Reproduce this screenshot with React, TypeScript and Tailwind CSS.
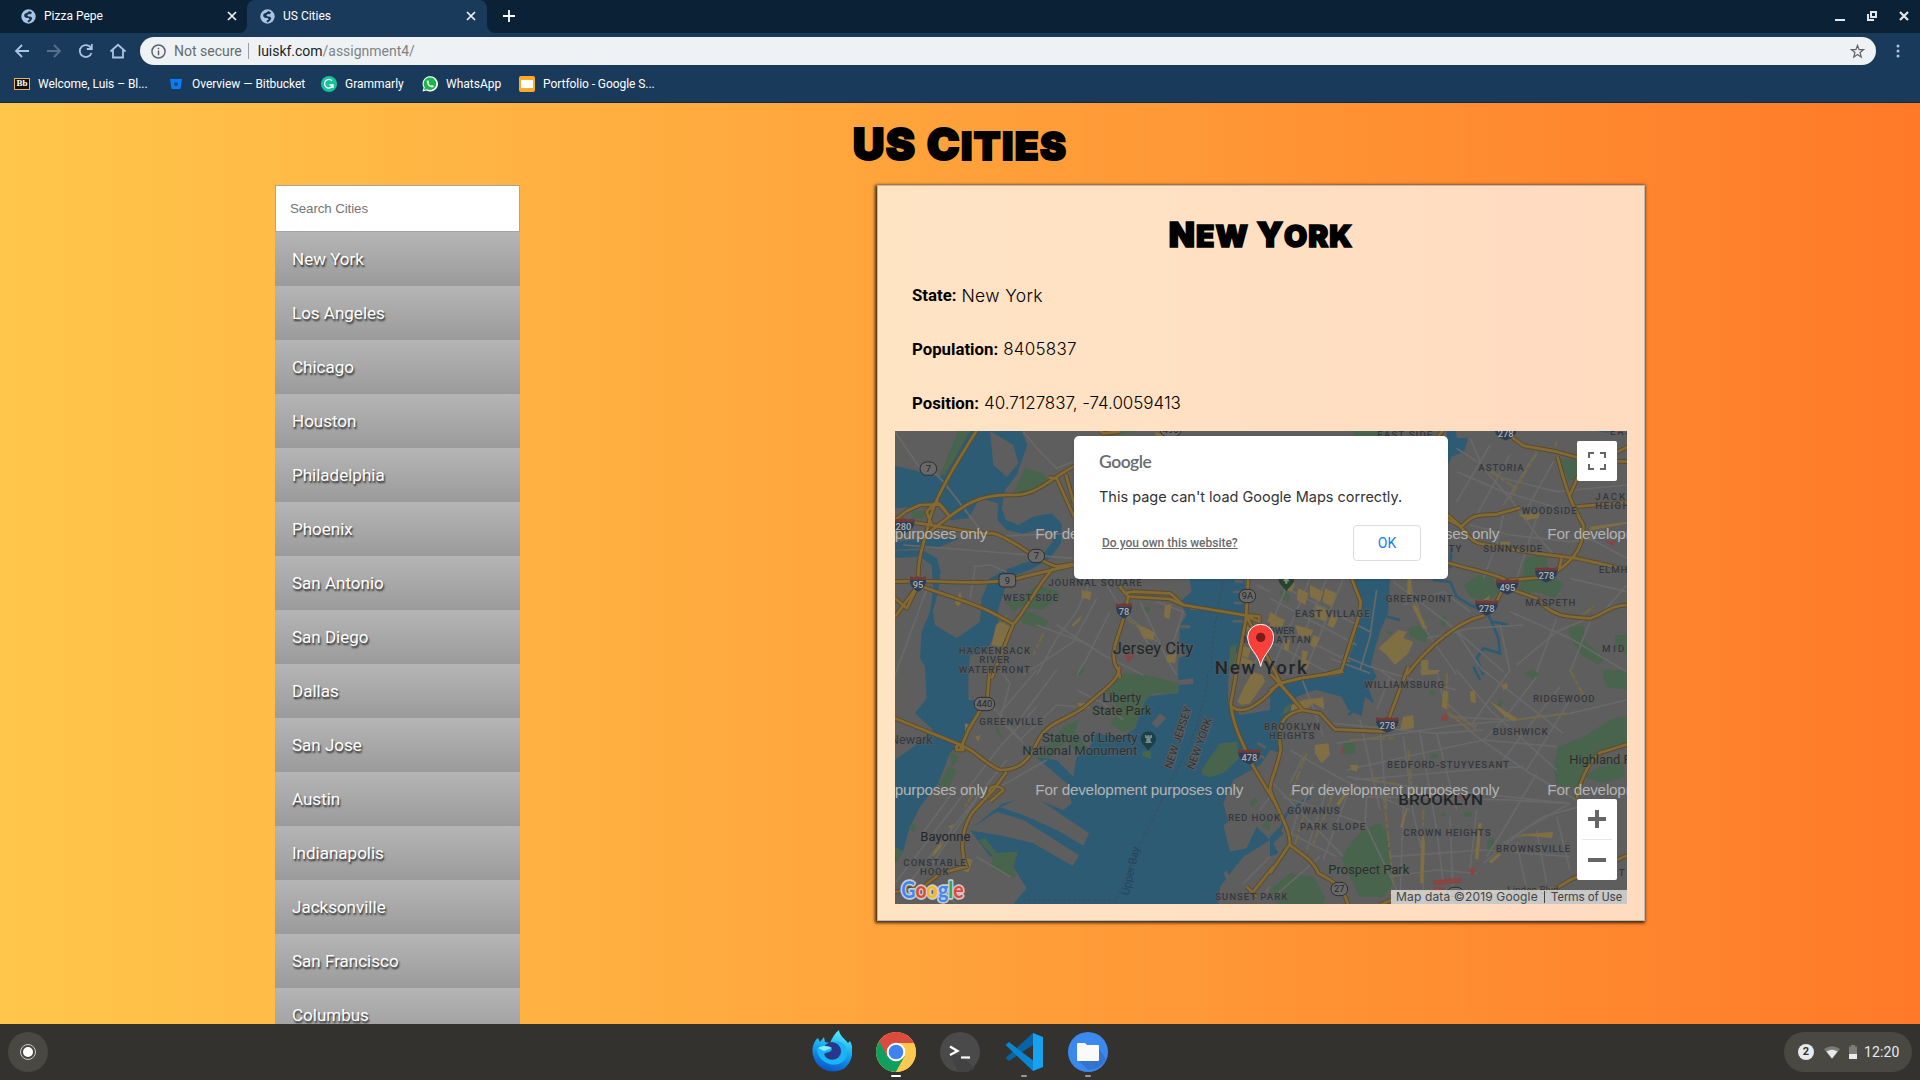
import React from "react";

const cities = [
  "New York", "Los Angeles", "Chicago", "Houston", "Philadelphia", "Phoenix", "San Antonio", "San Diego",
  "Dallas", "San Jose", "Austin", "Indianapolis", "Jacksonville", "San Francisco", "Columbus",
];

const NW = "translate(-15 -18)";
const NE = "translate(1125 -18)";
const SW = "translate(-15 717)";
const SE = "translate(1125 717)";
const MID = "translate(705 417)";

type Sheet = { at: string; d: string[] };

const water: Sheet[] = [
  {
    at: NW,
    d: [
      "M262 18 L395 18 L412 60 L380 150 L345 195 L335 250 L348 285 L385 300 L430 275 L485 265 L515 295 L513 355 L480 400 L430 430 L380 450 L345 490 L325 550 L325 600 L290 680 L240 690 L235 750 L120 750 L90 700 L95 620 L120 560 L130 490 L125 420 L90 395 L15 398 V378 L95 375 L140 398 L152 440 L145 500 L128 560 L135 600 L200 640 L270 590 L275 520 L300 460 L345 435 L400 415 L450 400 L488 350 L488 325 L450 312 L400 326 L350 315 L322 285 L325 235 L270 220 L235 280 L185 285 L150 240 L15 250 V122 L150 155 L205 18 Z",
      "M120 340 L210 340 L150 365 L15 375 V350 Z",
      "M895 440 H1065 V520 L1060 600 L1045 680 L1018 700 L1015 760 H865 L865 700 L890 690 L868 650 L870 600 L890 570 L870 530 L905 500 Z",
    ],
  },
  {
    at: NE,
    d: [
      "M246 455 H360 L355 560 L330 620 L312 680 L295 760 H205 L240 690 L272 560 Z",
      "M530 18 L555 18 L562 40 L595 38 L582 80 L545 95 L530 130 Z",
      "M980 18 H1030 L1010 24 Z",
    ],
  },
  {
    at: SW,
    d: [
      "M865 -10 L865 68 L770 80 L735 175 L690 205 L620 190 L590 250 L560 260 L550 320 L500 270 L440 262 L530 340 L545 400 L520 420 L420 380 L340 400 L300 430 L240 480 L300 560 L382 545 L370 590 L410 655 L370 702 L985 702 L990 650 L1060 560 L1140 510 L1100 470 L1070 535 L1020 545 L1000 465 L1015 455 L1000 400 L1030 330 L1110 285 L1170 200 L1210 110 L1140 120 L1050 135 L1015 100 L1014 50 L1016 -10 Z",
      "M105 -10 H235 V90 H270 L255 150 L205 225 L180 250 L145 340 L90 410 L60 470 L40 540 L15 580 V270 L70 230 L130 180 L75 130 L110 85 Z",
    ],
  },
  {
    at: SE,
    d: [
      "M0 60 L50 35 L220 15 L245 -10 H305 L320 20 L295 50 L310 100 L285 80 L275 138 L235 120 L215 80 L160 65 L135 60 L80 80 L50 130 L15 160 L35 250 L0 240 Z",
      "M0 500 L25 475 L40 490 L10 520 L25 550 L0 560 Z",
      "M275 650 L310 630 L340 650 L325 670 L280 680 Z",
    ],
  },
];

const land: Sheet[] = [
  { at: NW, d: ["M300 18 L370 60 L385 115 L350 155 L310 120 Z"] },
  {
    at: SW,
    d: [
      "M235 480 L320 425 L400 450 L568 556 L548 588 L430 520 L340 498 Z",
      "M330 412 L420 372 L480 410 L597 490 L580 527 L500 480 L400 435 Z",
      "M785 160 L810 130 L828 145 L800 175 Z",
      "M1040 585 L1050 575 L1080 610 L1070 620 Z M1065 570 L1078 562 L1105 595 L1092 605 Z M1095 552 L1108 545 L1130 580 L1120 590 Z M1000 610 L1010 600 L1030 640 L1020 650 Z",
    ],
  },
  {
    at: MID,
    d: [
      "M315 30 H340 V38 H315 Z M310 62 H340 V70 H310 Z M312 95 H338 V103 H312 Z M308 150 H338 V158 H308 Z",
      "M180 110 H205 V120 H180 Z M150 165 H180 V175 H150 Z M145 330 L190 325 V342 L145 345 Z",
      "M385 515 L410 530 L404 537 L380 522 Z M375 545 L405 560 L400 568 L370 552 Z",
    ],
  },
];

const parks: Sheet[] = [
  {
    at: NW,
    d: [
      "M150 150 L205 18 H240 L165 150 Z", "M370 205 L405 130 L460 145 L475 170 L410 205 Z", "M65 255 L105 262 L100 282 L65 278 Z",
      "M345 530 L400 515 L440 480 L505 500 L510 520 L480 535 L460 555 L395 545 L370 560 Z",
      "M400 560 L420 560 L475 585 L465 612 L395 595 Z", "M762 545 L780 545 L778 562 L762 560 Z", "M545 750 L585 725 L575 750 Z", "M670 18 H740 L690 28 Z",
    ],
  },
  {
    at: NE,
    d: [
      "M865 100 L920 105 L925 160 L895 170 Z", "M765 400 L830 388 L830 430 L880 480 L855 520 L800 500 L740 510 L760 450 Z",
      "M580 480 L625 450 L670 460 L690 500 L650 530 L600 515 Z", "M895 605 L940 600 L945 650 L1005 700 L985 720 L935 690 L900 640 Z",
      "M1035 630 H1070 V690 L1035 670 Z", "M415 610 L445 600 L475 625 L470 655 L420 635 Z", "M512 575 L528 575 L526 605 L512 600 Z",
      "M30 495 L60 510 L55 530 L32 520 Z", "M345 615 L368 622 L360 630 Z", "M250 18 H355 L340 35 H250 Z",
    ],
  },
  {
    at: SW,
    d: [
      "M700 10 L770 15 L865 40 L862 72 L790 68 L760 100 L735 178 L700 185 L660 160 L690 120 L650 70 L620 80 Z",
      "M440 262 L520 170 L565 150 L555 190 L600 240 L560 245 L530 215 L480 265 Z", "M935 300 L990 220 L1040 215 L1047 265 L1000 310 L960 322 L938 315 Z",
      "M180 245 L210 260 L185 293 Z", "M145 345 L175 290 L200 300 L175 355 Z", "M265 510 L285 505 L320 548 L383 545 L370 590 L378 620 L330 610 L300 590 L310 560 Z",
      "M55 470 L68 458 L80 470 L70 487 Z", "M15 530 L40 545 L20 580 Z", "M1078 398 L1095 382 L1104 395 L1088 408 Z", "M755 245 L780 240 L785 268 L760 260 Z",
      "M315 175 L322 170 L335 200 L328 202 Z", "M1115 470 L1140 440 V480 Z",
    ],
  },
  {
    at: SE,
    d: [
      "M1000 0 H1070 V60 L1010 50 L1000 20 Z", "M850 290 L865 230 L940 200 L1030 145 L1070 140 V230 L990 250 L930 330 L918 355 L860 345 Z",
      "M940 320 L990 290 L1060 275 L1065 320 L1000 340 Z", "M218 218 L255 218 L257 250 L222 250 Z", "M213 560 L275 480 L325 460 L355 490 L365 600 L370 640 L340 680 L270 680 L240 620 Z",
      "M0 660 L60 610 L130 620 L165 680 L160 702 L20 702 Z", "M650 540 L655 505 L672 505 L672 540 Z", "M585 425 L605 425 L603 440 L582 440 Z",
      "M510 435 L520 425 L532 440 Z", "M680 105 L692 88 L700 98 L690 112 Z", "M480 255 L500 250 L502 263 L485 265 Z", "M760 10 L790 0 L810 15 L790 28 Z", "M480 62 H495 V75 H480 Z",
    ],
  },
  { at: MID, d: ["M300 230 L320 222 L312 290 L298 300 Z", "M465 410 L485 400 L475 425 L455 435 Z", "M680 140 L688 142 L668 240 L660 245 Z"] },
];

const blocks: Sheet[] = [
  {
    at: NW,
    d: [
      "M318 600 L330 590 L362 605 L335 665 L305 660 Z", "M575 495 L605 500 L600 525 L575 518 Z", "M825 540 L845 538 L838 583 L822 575 Z",
      "M745 600 L775 612 L795 625 L790 645 L760 640 Z", "M830 690 L860 680 L855 715 L830 710 Z", "M545 600 L575 570 L570 585 L550 605 Z", "M795 22 L830 30 L820 60 L800 50 Z",
      "M195 535 L210 500 L218 525 L205 545 Z",
    ],
  },
  {
    at: NE,
    d: [
      "M60 470 L75 475 L65 500 L50 495 Z", "M85 490 L115 505 L105 540 L80 525 Z", "M120 480 L160 500 L150 530 L120 515 Z", "M165 490 L200 505 L185 545 L158 530 Z",
      "M0 560 L25 575 L40 600 L25 615 L0 600 Z", "M140 540 L180 560 L165 590 L130 575 Z", "M185 565 L205 575 L190 610 L172 600 Z", "M75 600 L130 615 L120 640 L85 630 Z",
      "M130 630 L150 640 L135 670 L120 660 Z", "M95 700 L120 710 L110 735 L90 725 Z", "M45 640 L60 645 L55 680 L40 670 Z",
      "M325 670 L385 615 L410 620 L400 640 L430 650 L415 685 L375 720 L350 690 Z", "M412 462 H424 V520 L412 515 Z", "M425 540 L440 545 L470 610 L460 612 Z",
      "M745 270 L810 262 L805 280 L770 285 Z", "M690 350 H720 V365 H745 V380 H700 Z", "M960 305 L1070 290 V296 L965 316 Z", "M452 705 H475 V750 H455 Z", "M640 525 L660 510 L655 530 Z",
    ],
  },
  {
    at: SW,
    d: [
      "M225 160 L245 165 L238 190 L225 185 Z", "M255 200 L272 195 L265 215 Z",
      "M215 560 L248 570 L235 608 L215 600 Z", "M130 545 L150 520 L155 530 L130 560 Z", "M175 470 L190 462 L185 478 Z", "M560 100 L590 98 L600 115 L575 118 Z",
    ],
  },
  {
    at: SE,
    d: [
      "M65 105 L100 90 L160 82 L162 118 L130 100 L95 130 L60 130 Z", "M135 225 L175 220 L180 255 L155 280 L135 250 Z", "M520 60 L535 65 L530 120 L515 110 Z",
      "M600 65 L615 60 L618 100 L602 95 Z", "M655 90 L740 145 L735 155 L705 140 Z", "M695 45 L710 38 L715 50 L700 60 Z", "M400 140 L430 135 L432 175 L390 180 Z",
      "M390 470 L408 415 L412 420 L398 475 Z", "M625 460 L635 460 L625 570 L615 565 Z", "M655 575 L690 545 L692 555 L665 580 Z", "M745 495 L850 485 L845 505 Z",
      "M240 285 L265 285 L260 305 L245 300 Z", "M455 470 L465 520 L460 640 L450 640 Z", "M450 0 H510 L500 12 L455 16 Z", "M200 400 L230 360 L235 365 L205 410 Z",
    ],
  },
  {
    at: MID,
    d: [
      "M322 395 L342 350 L368 306 L398 315 L405 335 L360 400 L335 405 Z", "M335 225 L362 235 L355 265 L330 255 Z", "M375 185 L345 180 L350 165 Z", "M332 258 L370 275 L365 290 L328 280 Z",
      "M515 240 L535 245 L525 275 L515 270 Z", "M420 130 L465 150 L455 170 L412 155 Z",
    ],
  },
];

const reds: Sheet[] = [
  { at: NW, d: ["M705 690 L735 685 L715 715 Z", "M715 495 L730 485 L722 500 Z"] },
  { at: NE, d: ["M1005 350 L1038 345 L1030 362 Z"] },
  { at: SE, d: ["M513 135 L533 132 L533 152 L513 152 Z", "M213 232 L223 236 L222 250 L213 250 Z", "M490 630 L575 624 V638 L490 645 Z", "M490 652 H522 V662 H490 Z", "M600 595 L617 592 L612 618 L602 612 Z", "M560 380 L580 378 L575 390 Z"] },
];

const streets: Sheet[] = [
  {
    at: NW,
    d: [
      "M15 20 L90 130 L110 120 L160 170 L260 300 L270 312", "M400 20 L450 80 L500 130 L550 110", "M320 335 L400 330 L550 325", "M40 360 L550 400",
      "M250 425 L300 420 L350 440", "M240 520 L255 430", "M15 750 L115 480", "M600 470 L560 560 L500 640 L440 750", "M500 600 L640 690 L760 750",
      "M660 560 L590 700 L560 750", "M400 750 L550 650 L620 520", "M440 600 L600 660", "M750 530 L830 700 L860 750", "M800 530 L880 560 L840 680",
      "M650 480 L700 560 L800 650", "M740 600 L800 700", "M1100 480 L1140 500",
    ],
  },
  {
    at: NE,
    d: [
      "M30 480 L300 620", "M0 520 L260 660", "M0 590 L240 710", "M0 650 L180 745", "M60 461 L-60 750", "M120 461 L0 750", "M170 461 L50 750", "M220 461 L100 750",
      "M370 470 L540 600 L700 740", "M420 480 L470 620 L560 750", "M400 540 L520 500 L600 560", "M470 640 L600 610 L760 600", "M560 70 L700 160 L860 200 L1070 180",
      "M600 40 L640 130 L720 220 L800 330 L860 400", "M560 140 L700 200 L900 260", "M660 60 L560 230", "M720 90 L620 270", "M800 80 L700 240", "M850 110 L760 270",
      "M600 300 L720 330 L900 350 L1070 330", "M700 270 L680 360 L640 460", "M800 280 L740 460", "M940 330 L1070 400", "M900 460 L1070 500", "M720 560 L900 640 L1070 740",
      "M740 720 L860 620 L1000 560 L1070 480", "M690 600 L720 740", "M860 580 L800 740", "M960 590 L900 740", "M560 620 L640 740", "M180 700 L300 745",
    ],
  },
  {
    at: SW,
    d: [
      "M15 640 L330 230 L440 110", "M40 660 L350 270", "M120 590 L300 330", "M330 0 L360 40 L330 150 L390 210", "M300 100 L400 220", "M390 210 L500 105 L560 110",
      "M440 0 L330 130", "M500 0 L380 160", "M200 350 L90 500", "M330 350 L470 270", "M260 560 L360 620", "M1110 420 L1140 380", "M110 640 L200 700", "M560 60 L640 100 L700 150",
      "M1140 560 L1060 640", "M1110 690 L1140 650",
    ],
  },
  {
    at: SE,
    d: [
      "M190 160 L500 190 L640 180", "M200 220 L560 165 L740 150", "M230 300 L500 240 L640 210", "M250 330 L600 300 L760 290", "M290 380 L720 390 L880 400",
      "M230 320 L420 350 L900 400", "M60 240 L220 330 L420 420", "M270 150 L330 420", "M330 180 L350 420", "M400 200 L430 430 L460 560 L460 702", "M450 190 L500 480 L520 640",
      "M500 190 L560 420", "M540 130 L620 200 L780 310 L920 390", "M500 0 L520 90 L620 180", "M560 0 L660 120 L860 300", "M640 0 L740 80 L880 190", "M720 0 L600 170",
      "M800 20 L700 150 L640 210", "M870 50 L760 190 L700 270", "M900 90 L770 300", "M540 140 L720 150 L900 130 L1070 90", "M640 210 L860 230", "M800 310 L700 480 L650 560",
      "M900 400 L760 480 L640 580", "M1000 390 L820 440 L700 520", "M360 560 L640 540 L900 560", "M400 410 L390 702", "M540 440 L550 702", "M620 420 L600 600", "M740 520 L780 702",
      "M800 480 L830 640", "M860 440 L900 600", "M130 340 L80 440 L60 510", "M180 330 L110 540", "M240 350 L160 570", "M290 380 L285 460 L380 660", "M0 330 L220 560",
      "M40 380 L280 460", "M60 490 L200 560", "M0 690 L150 560", "M360 620 L500 600 L620 610", "M100 260 L60 340", "M330 0 L400 50", "M440 30 L560 60", "M360 20 L320 120",
    ],
  },
  { at: MID, d: ["M635 255 L720 290 L850 330", "M515 325 L545 400 L580 500", "M740 60 L720 200 L690 300"] },
];

const avenues: Sheet[] = [
  {
    at: SE,
    d: [
      "M110 250 L60 380", "M415 240 L430 400", "M240 210 L370 205", "M300 325 L390 345", "M530 10 L535 130 L600 180", "M730 150 L890 130", "M900 0 L940 75", "M190 370 L130 520",
      "M340 370 L350 460 L370 640", "M100 440 L70 540", "M460 420 L458 640", "M630 460 L620 560", "M740 500 L800 490", "M560 140 L620 170",
    ],
  },
  { at: NE, d: ["M800 85 L720 220", "M660 140 L740 190", "M415 500 L470 610", "M860 50 L855 65", "M940 570 L970 545", "M960 310 L965 350"] },
  { at: NW, d: ["M710 580 L760 620 L790 640", "M460 625 L430 690", "M350 570 L320 680"] },
  { at: SW, d: ["M160 520 L125 560", "M250 370 L225 410"] },
];

const highways: Sheet[] = [
  {
    at: NW,
    d: [
      "M264 10 C220 80 130 220 118 290 C100 360 82 400 85 470", "M560 120 C480 160 440 212 370 210 C260 206 220 240 120 320", "M15 285 L50 258 L90 240 L150 238 L170 262",
      "M60 292 C160 300 240 330 310 325 C370 340 440 410 500 425 L560 415", "M15 470 L100 468 C250 475 340 475 400 455 L560 418", "M15 575 L85 480 C160 510 240 530 300 560 L370 597",
      "M490 430 C440 480 400 570 370 597 L305 760", "M475 158 L500 160 L552 275", "M528 150 L552 235", "M685 480 L715 515 L700 580 C690 630 650 690 685 735 L690 760",
      "M700 505 L730 500 L840 505 L880 540 L1060 570 L1108 574 V590 L1065 572", "M715 515 L840 522 L880 540", "M1075 455 L1068 580 L1050 680 L1030 795", "M630 18 L640 25 L690 20",
      "M15 520 L50 550 L80 490", "M125 300 L110 260 L140 230 L180 275", "M1070 575 L1180 790",
    ],
  },
  {
    at: NE,
    d: [
      "M243 455 L272 530 L268 570 L245 640 L215 735 L160 750", "M530 282 L575 305 C610 265 620 273 680 268 L750 248", "M530 268 C600 320 590 350 640 358 L800 385 L920 400 L1075 435",
      "M530 412 C580 430 660 440 710 466 L830 456 C900 420 945 370 940 300 C900 230 885 180 862 95", "M690 10 L760 62 L860 80 L950 105 L1075 110", "M900 210 L935 130 L1075 65", "M920 245 L1075 232",
      "M710 466 L680 530 L640 572 C560 590 470 670 410 750", "M715 490 L800 520 C850 580 900 575 960 580 C1000 570 1020 540 1075 540", "M500 40 L520 15", "M875 400 L868 430",
    ],
  },
  {
    at: SW,
    d: [
      "M688 -10 C690 30 640 60 590 105 C540 150 470 150 440 220 C410 290 370 300 330 300 C280 280 260 240 200 220 L15 145", "M300 -10 L292 85 L235 180 L210 240",
      "M350 305 L310 360 L245 430 C210 490 210 540 230 590 L150 610 L100 650 L15 666", "M1030 60 L1022 100 C1030 180 1070 240 1090 290 L1150 390", "M1026 110 C1060 140 1120 95 1160 45",
      "M300 370 C290 345 330 345 340 360 L300 395", "M200 240 C190 225 225 215 220 240 Z", "M1150 590 L1090 665", "M1070 650 L1100 680",
    ],
  },
  {
    at: SE,
    d: [
      "M220 5 L90 25 L30 40 L0 62", "M415 -10 L355 150 L345 185 L195 178 L150 130 L98 120 L30 42 L0 10", "M98 120 C40 130 20 160 32 240 C20 300 0 330 0 360 C20 420 60 470 60 525 C90 550 130 570 145 610 C210 640 230 680 235 710",
      "M60 522 L0 610", "M1075 222 L990 248 C960 270 930 330 920 385", "M1075 555 L900 630 L850 660", "M330 705 L370 688",
    ],
  },
];

const creeks: Sheet[] = [
  { at: NE, d: ["M488 465 L540 470 L560 515 L600 540 L650 560 L665 590 L685 640 L690 685 L640 670 L620 700 L640 750", "M670 590 L715 600", "M545 370 L540 430", "M350 575 L390 585"] },
  { at: SE, d: ["M610 -10 L630 30", "M30 480 L50 430 L120 380"] },
  { at: MID, d: ["M680 350 L730 395", "M655 380 L685 430", "M700 400 L655 435"] },
];

const borders: Sheet[] = [
  { at: NW, d: ["M1000 455 C985 560 960 650 965 740"] },
  { at: SW, d: ["M955 0 C940 130 900 250 840 330 C800 430 720 580 680 690 H400"] },
];

type LabelSpec = [number, number, number, number, string, string?];
const labels: { at: string; items: LabelSpec[] }[] = [
  {
    at: NW,
    items: [
      [475, 482, 280, 29, "JOURNAL SQUARE"], [340, 527, 165, 29, "WEST SIDE"], [206, 686, 214, 29, "HACKENSACK"], [268, 714, 90, 29, "RIVER"], [206, 743, 214, 29, "WATERFRONT"],
      [668, 686, 242, 47, "Jersey City", "#222629"], [974, 746, 276, 56, "New York", "#222629"],
    ],
  },
  {
    at: NE,
    items: [
      [322, 38, 165, 29, "EAST SIDE"], [1020, 30, 120, 29, "EAST E"], [625, 138, 136, 29, "ASTORIA"], [755, 267, 165, 29, "WOODSIDE"], [976, 224, 165, 29, "JACKSON"], [976, 251, 145, 29, "HEIGHTS"],
      [640, 381, 177, 29, "SUNNYSIDE"], [536, 381, 38, 29, "TY"], [986, 444, 170, 29, "ELMHURST"], [347, 531, 200, 29, "GREENPOINT"], [766, 543, 150, 29, "MASPETH"], [75, 576, 224, 29, "EAST VILLAGE"],
      [-20, 627, 94, 29, "LOWER"], [-80, 654, 202, 29, "MANHATTAN"], [996, 681, 140, 29, "MIDDLE"],
    ],
  },
  {
    at: SW,
    items: [
      [268, 165, 190, 29, "GREENVILLE"], [0, 223, 128, 40, "Newark"], [637, 96, 117, 40, "Liberty", "#1f3323"], [607, 134, 178, 40, "State Park", "#1f3323"],
      [456, 216, 286, 40, "Statue of Liberty", "#1f3538"], [397, 254, 345, 40, "National Monument", "#1f3538"], [91, 512, 150, 41, "Bayonne", "#222629"],
      [40, 588, 187, 29, "CONSTABLE"], [90, 615, 86, 29, "HOOK"], [1014, 453, 156, 29, "RED HOOK"], [975, 690, 217, 29, "SUNSET PARK"], [1122, 180, 168, 29, "BROOKLYN"], [1137, 207, 136, 29, "HEIGHTS"],
    ],
  },
  {
    at: SE,
    items: [
      [283, 53, 239, 29, "WILLIAMSBURG"], [789, 95, 185, 29, "RIDGEWOOD"], [668, 195, 165, 29, "BUSHWICK"], [351, 294, 366, 29, "BEDFORD-STUYVESANT"], [385, 405, 254, 43, "BROOKLYN", "#222629"],
      [52, 432, 157, 29, "GOWANUS"], [90, 480, 196, 29, "PARK SLOPE"], [400, 498, 262, 29, "CROWN HEIGHTS"], [678, 546, 222, 29, "BROWNSVILLE"], [175, 611, 243, 41, "Prospect Park", "#1f3323"],
      [898, 281, 240, 40, "Highland Park", "#1f3323"], [712, 673, 153, 34, "Linden Blvd"], [1046, 618, 30, 29, "T"],
    ],
  },
];

type Pin = [string, number, number, string];
const interstates: Pin[] = [
  [NW, 84, 478, "95"], [NW, 702, 558, "78"], [NW, 40, 304, "280"], [NE, 707, 24, "278"], [NE, 829, 450, "278"], [NE, 712, 486, "495"], [NE, 650, 549, "278"], [SW, 1078, 261, "478"], [SE, 352, 165, "278"],
];
const routes: Pin[] = [
  [NW, 115, 131, "7"], [NW, 439, 393, "7"], [NW, 352, 466, "9"], [NW, 842, 15, "495"], [NW, 1072, 513, "9A"], [SW, 283, 102, "440"], [SE, 208, 657, "27"], [SE, 556, 672, "27"],
];

function Layer({ sheets, ...rest }: { sheets: Sheet[] } & React.SVGProps<SVGPathElement>) {
  return (
    <>
      {sheets.map((s, i) => (
        <g key={i} transform={s.at}>
          {s.d.map((d) => <path key={d} d={d} {...rest} />)}
        </g>
      ))}
    </>
  );
}

function CityMap() {
  return (
    <svg viewBox="0 0 2196 1419" className="block h-full w-full font-[Roboto]" preserveAspectRatio="none">
      <rect width="2196" height="1419" fill="#5e5e5e" />
      <Layer sheets={water} fill="#2e5b74" />
      <Layer sheets={land} fill="#5e5e5e" />
      <Layer sheets={parks} fill="#48644c" />
      <Layer sheets={creeks} fill="none" stroke="#2e5b74" strokeWidth="8" />
      <Layer sheets={streets} fill="none" stroke="#69696a" strokeWidth="5" />
      <Layer sheets={avenues} fill="none" stroke="#756944" strokeWidth="6" strokeDasharray="30 5 14 8" />
      <Layer sheets={blocks} fill="#806f43" />
      <Layer sheets={reds} fill="#884541" />
      <Layer sheets={borders} fill="none" stroke="#3e4b53" strokeWidth="3" strokeDasharray="8 7" />
      <Layer sheets={highways} fill="none" stroke="#5b4b2d" strokeWidth="14" strokeLinejoin="round" />
      <Layer sheets={highways} fill="none" stroke="#836a35" strokeWidth="8" strokeLinejoin="round" />
      <path d="M1485 1386 L1815 1382 L1985 1372" fill="none" stroke="#836a35" strokeWidth="8" />
      {labels.map((group, i) => (
        <g key={i} transform={group.at}>
          {group.items.map(([x, y, w, size, text, color]) => (
            <text key={text + y} x={x} y={y} fontSize={size} textLength={w} lengthAdjust={size === 29 || size === 56 ? "spacing" : "spacingAndGlyphs"}
              fontWeight={size === 29 || size === 56 || size === 43 ? 500 : 400}
              fill={color ?? "#34383d"} stroke="#5e5e5e" strokeOpacity="0.7" strokeWidth="5" paintOrder="stroke">{text}</text>
          ))}
        </g>
      ))}
      <g fill="#2f3439" fontSize="33" stroke="#5e5e5e" strokeWidth="6" paintOrder="stroke">
        <text transform="translate(830 1015) rotate(-72)" textLength="194">NEW JERSEY</text>
        <text transform="translate(896 1018) rotate(-70)" textLength="162">NEW YORK</text>
      </g>
      <text transform="translate(701 1394) rotate(-77)" textLength="148" fontSize="34" fill="#24465a">Upper Bay</text>
      {interstates.map(([at, x, y, n]) => (
        <g key={at + x} transform={at}>
          <g transform={`translate(${x} ${y}) scale(${n.length > 2 ? 1 : 0.72} 1)`}>
            <path d="M-33 -22 Q0 -14 33 -22 Q42 8 0 24 Q-42 8 -33 -22Z" fill="#2d3d53" stroke="#666" strokeWidth="1.5" />
            <path d="M-33 -24 Q-15 -18 0 -24 Q15 -18 33 -24 L34 -13 H-34Z" fill="#713a37" />
          </g>
          <text x={x} y={y + 12} textAnchor="middle" fontSize="28" fontWeight="500" fill="#b0b0b0">{n}</text>
        </g>
      ))}
      {routes.map(([at, x, y, n]) => (
        <g key={at + x} transform={at}>
          <rect x={x - (n.length > 2 ? 31 : 25)} y={y - 20} width={n.length > 2 ? 62 : 50} height="40" rx={n === "9" ? 11 : 20} fill="#696969" stroke="#2d2d2d" strokeWidth="3" />
          <text x={x} y={y + 10} textAnchor="middle" fontSize="28" fontWeight="400" fill="#262626">{n}</text>
        </g>
      ))}
      <g transform="translate(760 926)">
        <path d="M0 34 C-5 20 -23 15 -23 -2 A23 23 0 0 1 23 -2 C23 15 5 20 0 34Z" fill="#1d4044" />
        <path d="M-10 -14 H-5 V-10 H-2 V-14 H3 V-10 H6 V-14 H11 V-5 H7 V5 L11 10 H-10 L-6 5 V-5 H-10Z" fill="#74898b" />
      </g>
      <g transform="translate(1174 448)">
        <path d="M0 34 C-5 20 -23 15 -23 -2 A23 23 0 0 1 23 -2 C23 15 5 20 0 34Z" fill="#284332" />
        <path d="M0 -12 L10 3 H3 V10 H-3 V3 H-10Z" fill="#829487" />
      </g>
      <g fill="#b3b3b3" fontSize="46" className="font-['Liberation_Sans']">
        {[314, 1081].map((y) => (
          <g key={y}>
            <text x="-347" y={y + 11} textLength="624">For development purposes only</text>
            <text x="421" y={y + 11} textLength="624">For development purposes only</text>
            <text x="1189" y={y + 11} textLength="624">For development purposes only</text>
            <text x="1957" y={y + 11} textLength="624">For development purposes only</text>
          </g>
        ))}
      </g>
      <g transform="translate(1097 706)">
        <path d="M0 0 C-6 -38 -39 -52 -39 -88 A39 38 0 0 1 39 -88 C39 -52 6 -38 0 0Z" fill="#f7403a" stroke="#fff" strokeWidth="3" />
        <circle cy="-87" r="14" fill="#7e1a17" />
      </g>
      <g transform="translate(19 1400)" fontSize="66" fontWeight="700" className="font-[Lato]" stroke="#c9ccce" strokeWidth="10" paintOrder="stroke" strokeLinejoin="round">
        <text textLength="187" lengthAdjust="spacingAndGlyphs">
          <tspan fill="#4285f4">G</tspan><tspan fill="#e94335">o</tspan><tspan fill="#f9b916">o</tspan><tspan fill="#4285f4">g</tspan><tspan fill="#34a353">l</tspan><tspan fill="#e94335">e</tspan>
        </text>
      </g>
    </svg>
  );
}

function Globe() {
  return (
    <svg viewBox="0 0 24 24" className="h-[15px] w-[15px] shrink-0">
      <circle cx="12" cy="12" r="11.5" fill="#a9c4e4" />
      <path d="M13 3 L17.500 5 L16 8.500 L12.500 8 L10 10 L12 12 L16.500 12.500 L18 15.500 L15.500 19 L12 21.500 L10.500 20.500 L11 18.500 L14 16.500 L12 14.500 L7.500 14 L5 11.500 L5.500 8 L8.500 6.500 L10.500 5.500Z" fill="#17334f" />
    </svg>
  );
}

function Cross() {
  return <svg viewBox="0 0 10 10" className="h-[10px] w-[10px]"><path d="M1 1 L9 9 M9 1 L1 9" stroke="#f1f3f5" strokeWidth="1.7" /></svg>;
}

function Browser() {
  return (
    <header className="h-[103px] border-b border-[#12293f] bg-[#1a3a5c] font-[Roboto] text-white">
      <div className="flex h-[33px] bg-[#0b2135]">
        <div className="flex w-[247px] items-center bg-[#1a3a5c]">
          <div className="flex h-full w-full items-center rounded-br-lg bg-[#0b2135] pr-[10px] pb-px pl-[21px] text-[12px]">
            <Globe /><span className="ml-2 flex-1">Pizza Pepe</span><Cross />
          </div>
        </div>
        <div className="flex w-[240px] items-center rounded-t-lg bg-[#1a3a5c] pr-[11px] pb-px pl-[13px] text-[12px]">
          <Globe /><span className="ml-2 flex-1">US Cities</span><Cross />
        </div>
        <div className="flex flex-1 bg-[#1a3a5c]">
          <div className="flex flex-1 items-center rounded-bl-lg bg-[#0b2135] pb-px pl-4">
            <svg viewBox="0 0 12 12" className="h-3 w-3"><path d="M6 0V12M0 6H12" stroke="#fff" strokeWidth="1.8" /></svg>
            <div className="flex flex-1 items-center justify-end gap-[22px] pr-[11px]">
              <svg viewBox="0 0 10 10" className="h-[10px] w-[10px]"><path d="M0 9H10" stroke="#e4e8ec" strokeWidth="2" /></svg>
              <svg viewBox="0 0 10 10" className="h-[10px] w-[10px]"><path d="M4 1H9V6H4Z M1 3V9H7" fill="none" stroke="#e4e8ec" strokeWidth="2" /></svg>
              <svg viewBox="0 0 10 10" className="h-[10px] w-[10px]"><path d="M1 1 L9 9 M9 1 L1 9" stroke="#e4e8ec" strokeWidth="2.2" /></svg>
            </div>
          </div>
        </div>
      </div>
      <div className="flex h-[36px] items-center pl-[14px]">
        <svg viewBox="0 0 112 16" className="mr-[14px] h-4 w-[112px]" fill="none" strokeWidth="1.8">
          <path d="M15 8H2M8 2L2 8L8 14" stroke="#a9c4e4" />
          <path d="M33 8H46M40 2L46 8L40 14" stroke="#56718f" />
          <path d="M77 5A6 6 0 1 0 77.500 10M77.800 1V6H72.800" stroke="#a9c4e4" />
          <path d="M96.500 8.500L104 1.800L111.500 8.500M99 7V14.500H109V7" stroke="#a9c4e4" />
        </svg>
        <div className="flex h-[28px] w-[1736px] items-center rounded-full bg-[#eff2f4] px-[11px] text-[14px] text-[#666a6d]">
          <svg viewBox="0 0 16 16" className="h-[15px] w-[15px]" fill="none" stroke="#5f6368" strokeWidth="1.6"><circle cx="8" cy="8" r="7" /><path d="M8 7V12M8 4V5.700" /></svg>
          <span className="ml-2">Not secure</span>
          <span className="mx-[6px] h-4 w-px bg-[#9aa0a4]" />
          <span className="ml-[3px] flex-1 tracking-[-0.02px]"><span className="text-[#222426]">luiskf.com</span><span className="text-[#7f8386]">/assignment4/</span></span>
          <svg viewBox="0 0 16 16" className="h-[15px] w-[15px]" fill="none" stroke="#5f6368" strokeWidth="1.3"><path d="M8 1.500L9.700 6H14.500L10.700 9L12 14L8 11.200L4 14L5.300 9L1.500 6H6.300Z" /></svg>
        </div>
        <svg viewBox="0 0 4 14" className="ml-[20px] h-[14px] w-1" fill="#a9c4e4"><circle cx="2" cy="2" r="1.500" /><circle cx="2" cy="7" r="1.500" /><circle cx="2" cy="12" r="1.500" /></svg>
      </div>
      <div className="flex h-[30px] items-center pl-[14px] text-[12px]">
        <div className="flex w-[156px] items-center gap-2">
          <span className="flex h-[12px] w-[16px] items-center justify-center border border-[#e7b34c] bg-[#111] font-['Liberation_Serif'] text-[9px] font-bold">Bb</span>
          <span className="tracking-[-0.06px]">Welcome, Luis – Bl...</span>
        </div>
        <div className="flex w-[151px] items-center gap-[10px]">
          <svg viewBox="0 0 12 12" className="h-3 w-3"><path d="M0 1H12L10.400 11H1.600Z" fill="#0a7cf5" /><path d="M4 4.500H8L7.400 8H4.600Z" fill="#174a80" /></svg>
          <span className="tracking-[-0.05px]">Overview — Bitbucket</span>
        </div>
        <div className="flex w-[101px] items-center gap-2">
          <svg viewBox="0 0 16 16" className="h-4 w-4"><circle cx="8" cy="8" r="8" fill="#15c39a" /><path d="M11 4.800A4.300 4.300 0 1 0 12 9H8.500M12 9V12" fill="none" stroke="#fff" strokeWidth="1.300" /></svg>
          <span>Grammarly</span>
        </div>
        <div className="flex w-[97px] items-center gap-2">
          <svg viewBox="0 0 16 16" className="h-4 w-4"><path d="M0.500 15.500L1.600 11.700A7.700 7.700 0 1 1 4.400 14.500Z" fill="#fff" /><path d="M2 14L2.800 11.300A6.300 6.300 0 1 1 4.900 13.200Z" fill="#18b846" /><path d="M5 4.500C4 6 6 11 10 11.500C11.500 11.500 12 10 11.500 9.700L9.800 8.900L9 9.700C8 9.400 6.800 8.200 6.500 7.300L7.100 6.400L6.400 4.600Z" fill="#fff" /></svg>
          <span>WhatsApp</span>
        </div>
        <div className="flex items-center gap-2">
          <span className="h-4 w-4 rounded-[2px] border-x-2 border-y-4 border-[#fbab2a] bg-white" />
          <span className="tracking-[-0.06px]">Portfolio - Google S...</span>
        </div>
      </div>
    </header>
  );
}

function Shelf() {
  return (
    <footer className="flex h-14 items-center justify-between bg-[#33322e] pr-2 pl-2 font-[Roboto]">
      <div className="flex w-[128px]">
        <div className="flex h-10 w-10 items-center justify-center rounded-full bg-[#494843]">
          <div className="flex h-4 w-4 items-center justify-center rounded-full border border-[#c9c9c9]"><div className="h-[10px] w-[10px] rounded-full bg-white" /></div>
        </div>
      </div>
      <div className="flex gap-6 pt-[2px]">
        <div className="flex flex-col items-center">
          <svg viewBox="0 0 40 42" className="h-[42px] w-10">
            <defs><linearGradient id="fox" x1="0.700" y1="0" x2="0.400" y2="1"><stop offset="0" stopColor="#57f3fb" /><stop offset="0.500" stopColor="#14a5f2" /><stop offset="1" stopColor="#0a55c9" /></linearGradient></defs>
            <path d="M1 25C-1 17 3 10 6 8L8 12L12 7L13 12L18 13C20 8 23 3 27 0C27 5 33 9 36 13L38 11C43 20 40 32 33 38C23 45 5 42 1 25Z" fill="url(#fox)" />
            <circle cx="20" cy="21" r="9" fill="#27388c" />
            <path d="M5 19C10 15 17 16 20 19C19 23 14 22 12 24C14 31 25 32 29 25C32 18 26 12 22 12C30 9 38 18 34 28C27 40 6 35 5 19Z" fill="#1cb3f4" />
            <path d="M6 18C11 15 17 16 20 18L12 21Z" fill="#83ecf8" />
          </svg>
        </div>
        <div className="flex flex-col items-center">
          <svg viewBox="0 0 40 40" className="mt-[2px] h-10 w-10">
            <circle cx="20" cy="20" r="20" fill="#ffc94f" />
            <path d="M20 20L3.500 9A20 20 0 0 0 20 40L29 24Z" fill="#0fa05d" />
            <path d="M20 11H37.800A20 20 0 0 0 3.300 9L11 24L20 20Z" fill="#dc4b40" />
            <path d="M29 24L20 40A20 20 0 0 0 37.800 11H20Z" fill="#ffc94f" />
            <circle cx="20" cy="20" r="9.300" fill="#fff" /><circle cx="20" cy="20" r="7.300" fill="#3f83ee" />
          </svg>
          <span className="mt-[3px] h-[2px] w-[10px] rounded bg-white" />
        </div>
        <div className="mt-[2px] h-10 w-10 rounded-full bg-[#4a4a4a]">
          <svg viewBox="0 0 40 40" className="h-10 w-10"><path d="M20 23L35 36A20 20 0 0 1 18 40L10 23Z" fill="#424242" /><path d="M10 14.500L17.500 19L10 23" fill="none" stroke="#fff" strokeWidth="2.300" /><path d="M21 25.500H30" stroke="#fff" strokeWidth="2.200" /></svg>
        </div>
        <div className="flex flex-col items-center">
          <svg viewBox="0 0 40 40" className="mt-[2px] h-10 w-10">
            <path d="M1.500 26L5 29L29 13V1L1.500 26Z" fill="#0864a5" />
            <path d="M1.500 13L5 10L29 28.500V39Z" fill="#0a86d1" />
            <path d="M29 1L39 5V35L29 39Z" fill="#17a1ee" />
          </svg>
          <span className="mt-[3px] h-[2px] w-[6px] rounded bg-[#999]" />
        </div>
        <div className="flex flex-col items-center">
          <svg viewBox="0 0 40 40" className="mt-[2px] h-10 w-10"><circle cx="20" cy="20" r="20" fill="#3b88ee" /><path d="M10 28L20 38A19 19 0 0 0 38 27L31 17Z" fill="#3374ce" /><path d="M9 12Q9 11 10 11H17L19 13H30Q31 13 31 14V28Q31 29 30 29H10Q9 29 9 28Z" fill="#fafafa" /></svg>
          <span className="mt-[3px] h-[2px] w-[6px] rounded bg-[#999]" />
        </div>
      </div>
      <div className="flex h-10 w-32 items-center rounded-full bg-[#494843] pl-[14px] text-[#e8eaed]">
        <span className="flex h-4 w-4 items-center justify-center rounded-full bg-[#e8eaed] text-[11px] font-bold text-[#33322e]">2</span>
        <svg viewBox="0 0 16 13" className="ml-[10px] h-[13px] w-4"><path d="M0 3Q8 -2.500 16 3L8 13Z" fill="#7d7c78" /><path d="M2.500 5.500Q8 2 13.500 5.500L8 12.500Z" fill="#e8eaed" /></svg>
        <svg viewBox="0 0 8 14" className="ml-[9px] h-[14px] w-2"><path d="M2 0H6V1.500H8V9H0V1.500H2Z" fill="#7d7c78" /><path d="M0 9H8V14H0Z" fill="#e8eaed" /></svg>
        <span className="ml-[7px] text-[14px] font-normal tracking-[0.1px]">12:20</span>
      </div>
    </footer>
  );
}

function Fact({ name, value, track }: { name: string; value: string; track: string }) {
  return (
    <p className="flex h-[54px] items-center gap-[5px] pl-[34px] text-[16.8px] font-bold text-black">
      <span className="font-[Roboto]">{name}</span>
      <span className={"font-[Inter] font-light " + track}>{value}</span>
    </p>
  );
}

export default function App() {
  return (
    <div className="flex h-[1080px] w-[1920px] flex-col overflow-hidden">
      <Browser />
      <main className="flex h-[921px] flex-col overflow-hidden bg-linear-to-r from-[#ffc64b] to-[#ff7928]">
        <h1 className="flex h-[82px] shrink-0 items-center justify-center pb-px font-[Inter] text-[44px] font-black whitespace-pre text-black [-webkit-text-stroke:2px_black]">
          <span className="tracking-[1.4px]">US C<span className="text-[39px] uppercase">ities</span></span>
        </h1>
        <div className="flex items-start">
          <nav className="ml-[275px] w-[245px] shrink-0">
            <div className="flex h-[47px] items-center border border-[#a5a5a5] bg-white pl-[14px] font-['Liberation_Sans'] text-[13.33px] tracking-[-0.1px] text-[#757575]">Search Cities</div>
            {cities.map((c) => (
              <div key={c} className="flex h-[54px] items-center bg-linear-to-b from-[#b5b5b5] to-[#9b9b9b] pt-[2px] pl-[17px] font-[Roboto] text-[17px] text-white [text-shadow:1px_2px_2px_#222]">{c}</div>
            ))}
          </nav>
          <section className="ml-[357px] h-[736px] w-[768px] border border-[#bdbab6] bg-white/70 shadow-[-1px_1px_3px_1px_rgba(0,0,0,0.75)]">
            <h2 className="flex h-[83px] items-center justify-center pt-[13px] font-[Inter] text-[34px] font-black text-black [-webkit-text-stroke:1.6px_black]">
              <span className="tracking-[1px]">N<span className="text-[30px] uppercase">ew</span> Y<span className="text-[30px] uppercase">ork</span></span>
            </h2>
            <Fact name="State:" value="New York" track="text-[17.5px] tracking-[0.35px]" />
            <Fact name="Population:" value="8405837" track="text-[17px] tracking-[0.25px]" />
            <Fact name="Position:" value="40.7127837, -74.0059413" track="text-[17px] tracking-[-0.05px]" />
            <div className="relative mx-[17px] h-[473px] w-[732px] overflow-hidden">
              <CityMap />
              <div className="absolute top-[5px] left-[179px] h-[143px] w-[374px] rounded-[5px] bg-white px-[25px] pt-[14px] shadow">
                <div className="font-[Lato] text-[17.5px] leading-6 font-semibold tracking-[-0.5px] text-[#686b70]">Google</div>
                <div className="mt-[13px] font-[Inter] text-[14.5px] leading-5 text-[#333]">This page can't load Google Maps correctly.</div>
                <div className="mt-[18px] flex items-center justify-between pr-[2px] pl-[3px] font-[Roboto]">
                  <span className="text-[12px] font-medium text-[#6b6b6b] underline">Do you own this website?</span>
                  <span className="flex h-9 w-[68px] items-center justify-center rounded border border-[#dadce0] text-[14px] font-normal text-[#0d82ec]">OK</span>
                </div>
              </div>
              <div className="absolute top-[10px] right-[10px] flex h-10 w-10 items-center justify-center rounded-[2px] bg-white">
                <svg viewBox="0 0 18 18" className="h-[18px] w-[18px]" fill="none" stroke="#666" strokeWidth="2"><path d="M1 6V1H6M12 1H17V6M17 12V17H12M6 17H1V12" /></svg>
              </div>
              <div className="absolute right-[10px] bottom-[24px] flex h-[81px] w-10 flex-col items-center rounded-[2px] bg-white">
                <svg viewBox="0 0 40 40" className="h-10 w-10"><path d="M20 11V29M11 20H29" stroke="#666" strokeWidth="4" /></svg>
                <span className="h-px w-[30px] bg-[#e6e6e6]" />
                <svg viewBox="0 0 40 40" className="h-10 w-10"><path d="M11 20H29" stroke="#666" strokeWidth="4" /></svg>
              </div>
              <div className="absolute right-0 bottom-0 flex h-[14px] w-[236px] items-center bg-[#f5f5f5]/70 pl-[5px] text-[12px] text-[#444]">
                <span className="w-[143px] font-[Inter] tracking-[0.15px] whitespace-nowrap">Map data ©2019 Google</span>
                <span className="ml-[5px] h-3 w-px bg-[#444]" />
                <span className="ml-[6px] font-[Roboto] whitespace-nowrap">Terms of Use</span>
              </div>
            </div>
          </section>
        </div>
      </main>
      <Shelf />
    </div>
  );
}
